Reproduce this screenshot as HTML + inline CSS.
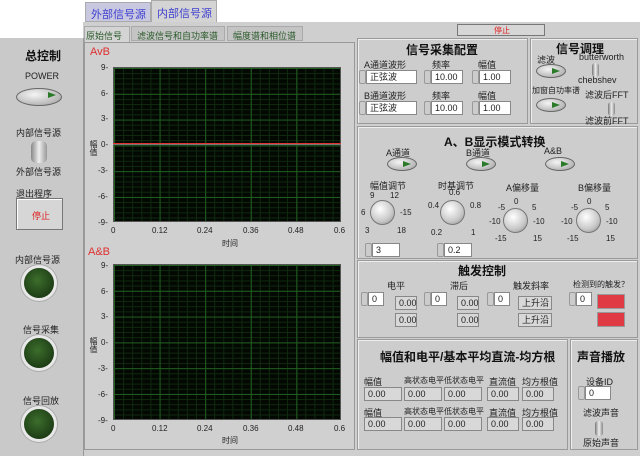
<!DOCTYPE html>
<html><head><meta charset="utf-8"><style>
*{margin:0;padding:0;box-sizing:border-box}
body{width:640px;height:456px;background:#fff;position:relative;overflow:hidden;font-family:"Liberation Sans","Noto Sans CJK SC",sans-serif;font-size:9px;color:#222}
.a{position:absolute}
.box{position:absolute;background:#cdcdcd;border:1px solid #9a9a9a;box-shadow:inset 1px 1px 0 #eee}
.t{position:absolute;white-space:nowrap}
.h{font-weight:bold;font-size:12px;color:#111}
.plot{position:absolute;background:#030803;
background-image:linear-gradient(#1f5e1f 1px,transparent 1px),linear-gradient(90deg,#1f5e1f 1px,transparent 1px),linear-gradient(#0f2a0f 1px,transparent 1px),linear-gradient(90deg,#0f2a0f 1px,transparent 1px);
background-size:45.6px 25.8px,45.6px 25.8px,9.12px 5.16px,9.12px 5.16px;border:1px solid #555}
.btn{position:absolute;width:34px;height:14px;border-radius:50%;background:radial-gradient(ellipse at 40% 35%,#f4f4f4,#b8b8b8 70%,#888);border:1px solid #666}
.btn:after{content:"";position:absolute;right:5px;top:3px;border-left:8px solid #2a7a2a;border-top:3px solid transparent;border-bottom:3px solid transparent;width:0;height:0}
.in{position:absolute;height:14px;background:#fff;border:1px solid #888;font-size:9px;padding-left:3px;line-height:12px}
.ro{background:#d8d8d8}
.sp{position:absolute;width:7px;height:14px;background:#ccc;border:1px solid #999;border-radius:2px}
.led{position:absolute;width:30px;height:30px;border-radius:50%;background:radial-gradient(circle at 45% 40%,#3c6e2c,#1e3e16 70%);box-shadow:0 0 0 3px #e8e8e8,0 0 0 4px #aaa}
.knob{position:absolute;width:25px;height:25px;border-radius:50%;background:radial-gradient(circle at 40% 35%,#fff,#c8c8c8 60%,#888);border:1px solid #777}
.sc{position:absolute;font-size:8px}
</style></head><body>
<div class="a" style="left:85px;top:2px;width:66px;height:20px;background:#c8c8e0;border:1px solid #aaa"></div>
<div class="t" style="left:91px;top:6px;color:#4040d0;font-size:11px">外部信号源</div>
<div class="a" style="left:151px;top:0;width:66px;height:24px;background:#d4d4d4;border:1px solid #aaa"></div>
<div class="t" style="left:157px;top:5px;color:#4040d0;font-size:11px">内部信号源</div>
<div class="a" style="left:83px;top:22px;width:557px;height:434px;background:#cfcfcf"></div>
<div class="a" style="left:0;top:38px;width:84px;height:418px;background:#c9c9c9;border-right:1px solid #999"></div>
<div class="t h" style="left:25px;top:47px">总控制</div>
<div class="t" style="left:25px;top:71px">POWER</div>
<div class="btn" style="left:16px;top:88px;width:46px;height:18px"></div>
<div class="t" style="left:16px;top:126px">内部信号源</div>
<div class="a" style="left:31px;top:141px;width:16px;height:22px;border-radius:5px;background:linear-gradient(90deg,#888,#eee,#999)"></div>
<div class="t" style="left:16px;top:165px">外部信号源</div>
<div class="t" style="left:16px;top:187px">退出程序</div>
<div class="a" style="left:16px;top:198px;width:47px;height:32px;background:#d6d6d6;border:1px solid #777;box-shadow:inset 1px 1px 0 #fff"></div>
<div class="t" style="left:32px;top:209px;color:#e02020">停止</div>
<div class="t" style="left:15px;top:253px">内部信号源</div>
<div class="led" style="left:24px;top:268px"></div>
<div class="t" style="left:23px;top:323px">信号采集</div>
<div class="led" style="left:24px;top:338px"></div>
<div class="t" style="left:23px;top:394px">信号回放</div>
<div class="led" style="left:24px;top:409px"></div>
<div class="a" style="left:84px;top:26px;width:46px;height:18px;background:#d4d4d4;border:1px solid #aaa;border-bottom:none"></div>
<div class="t" style="left:86px;top:29px;color:#2a5a2a">原始信号</div>
<div class="a" style="left:131px;top:26px;width:94px;height:15px;background:#c4c4c4;border:1px solid #aaa"></div>
<div class="t" style="left:137px;top:29px;color:#2a5a2a">滤波信号和自功率谱</div>
<div class="a" style="left:227px;top:26px;width:76px;height:15px;background:#c4c4c4;border:1px solid #aaa"></div>
<div class="t" style="left:233px;top:29px;color:#2a5a2a">幅度谱和相位谱</div>
<div class="a" style="left:84px;top:42px;width:271px;height:408px;background:#d0d0d0;border:1px solid #999"></div>
<div class="t" style="left:90px;top:46px;color:#e03030;font-size:11px">AvB</div>
<div class="plot" style="left:113px;top:67px;width:228px;height:155px"></div>
<div class="a" style="left:113px;top:143px;width:228px;height:1px;background:#e03030"></div>
<div class="a" style="left:113px;top:144px;width:228px;height:1px;background:#777"></div>
<div class="t" style="left:88px;top:140px;font-size:8px;writing-mode:vertical-rl">幅值</div>
<div class="sc" style="left:101px;top:63px">9-</div><div class="sc" style="left:101px;top:89px">6-</div><div class="sc" style="left:101px;top:114px">3-</div><div class="sc" style="left:101px;top:140px">0-</div><div class="sc" style="left:98px;top:166px">-3-</div><div class="sc" style="left:98px;top:192px">-6-</div><div class="sc" style="left:98px;top:218px">-9-</div>
<div class="sc" style="left:111px;top:226px">0</div><div class="sc" style="left:152px;top:226px">0.12</div><div class="sc" style="left:197px;top:226px">0.24</div><div class="sc" style="left:243px;top:226px">0.36</div><div class="sc" style="left:288px;top:226px">0.48</div><div class="sc" style="left:334px;top:226px">0.6</div>
<div class="t" style="left:222px;top:238px;font-size:8px">时间</div>
<div class="t" style="left:88px;top:246px;color:#e03030;font-size:11px">A&amp;B</div>
<div class="plot" style="left:113px;top:264px;width:228px;height:156px"></div>
<div class="t" style="left:88px;top:337px;font-size:8px;writing-mode:vertical-rl">幅值</div>
<div class="sc" style="left:101px;top:261px">9-</div><div class="sc" style="left:101px;top:287px">6-</div><div class="sc" style="left:101px;top:312px">3-</div><div class="sc" style="left:101px;top:338px">0-</div><div class="sc" style="left:98px;top:364px">-3-</div><div class="sc" style="left:98px;top:390px">-6-</div><div class="sc" style="left:98px;top:416px">-9-</div>
<div class="sc" style="left:111px;top:424px">0</div><div class="sc" style="left:152px;top:424px">0.12</div><div class="sc" style="left:197px;top:424px">0.24</div><div class="sc" style="left:243px;top:424px">0.36</div><div class="sc" style="left:288px;top:424px">0.48</div><div class="sc" style="left:334px;top:424px">0.6</div>
<div class="t" style="left:222px;top:435px;font-size:8px">时间</div>
<div class="a" style="left:457px;top:24px;width:88px;height:12px;background:#d6d6d6;border:1px solid #777"></div>
<div class="t" style="left:494px;top:25px;color:#e02020;font-size:8px">停止</div>
<div class="box" style="left:357px;top:38px;width:171px;height:86px"></div>
<div class="t h" style="left:406px;top:41px">信号采集配置</div>
<div class="t" style="left:364px;top:58px">A通道波形</div><div class="t" style="left:432px;top:58px">频率</div><div class="t" style="left:478px;top:58px">幅值</div>
<div class="sp" style="left:359px;top:70px"></div><div class="in" style="left:366px;top:70px;width:51px">正弦波</div>
<div class="sp" style="left:424px;top:70px"></div><div class="in" style="left:431px;top:70px;width:32px">10.00</div>
<div class="sp" style="left:472px;top:70px"></div><div class="in" style="left:479px;top:70px;width:32px">1.00</div>
<div class="t" style="left:364px;top:89px">B通道波形</div><div class="t" style="left:432px;top:89px">频率</div><div class="t" style="left:478px;top:89px">幅值</div>
<div class="sp" style="left:359px;top:101px"></div><div class="in" style="left:366px;top:101px;width:51px">正弦波</div>
<div class="sp" style="left:424px;top:101px"></div><div class="in" style="left:431px;top:101px;width:32px">10.00</div>
<div class="sp" style="left:472px;top:101px"></div><div class="in" style="left:479px;top:101px;width:32px">1.00</div>
<div class="box" style="left:530px;top:38px;width:108px;height:86px"></div>
<div class="t h" style="left:556px;top:40px">信号调理</div>
<div class="t" style="left:537px;top:53px">滤波</div>
<div class="t" style="left:579px;top:52px">butterworth</div>
<div class="btn" style="left:536px;top:64px;width:30px"></div>
<div class="a" style="left:592px;top:63px;width:7px;height:14px;background:linear-gradient(90deg,#777,#eee,#888);border-radius:3px"></div>
<div class="t" style="left:578px;top:75px">chebshev</div>
<div class="t" style="left:532px;top:85px;font-size:8px">加窗自功率谱</div>
<div class="t" style="left:585px;top:88px">滤波后FFT</div>
<div class="btn" style="left:536px;top:98px;width:30px"></div>
<div class="a" style="left:608px;top:102px;width:7px;height:14px;background:linear-gradient(90deg,#777,#eee,#888);border-radius:3px"></div>
<div class="t" style="left:585px;top:114px">滤波前FFT</div>
<div class="box" style="left:357px;top:126px;width:281px;height:133px"></div>
<div class="t h" style="left:444px;top:133px">A、B显示模式转换</div>
<div class="t" style="left:386px;top:146px">A通道</div><div class="t" style="left:466px;top:146px">B通道</div><div class="t" style="left:544px;top:146px">A&amp;B</div>
<div class="btn" style="left:387px;top:157px;width:30px"></div>
<div class="btn" style="left:466px;top:157px;width:30px"></div>
<div class="btn" style="left:545px;top:157px;width:30px"></div>
<div class="t" style="left:370px;top:179px">幅值调节</div><div class="t" style="left:438px;top:179px">时基调节</div><div class="t" style="left:506px;top:181px">A偏移量</div><div class="t" style="left:578px;top:181px">B偏移量</div>
<div class="knob" style="left:370px;top:200px"></div><div class="knob" style="left:440px;top:200px"></div><div class="knob" style="left:503px;top:208px"></div><div class="knob" style="left:576px;top:208px"></div>
<div class="sc" style="left:370px;top:191px">9</div><div class="sc" style="left:390px;top:191px">12</div><div class="sc" style="left:361px;top:208px">6</div><div class="sc" style="left:400px;top:208px">-15</div><div class="sc" style="left:365px;top:226px">3</div><div class="sc" style="left:397px;top:226px">18</div>
<div class="sc" style="left:449px;top:188px">0.6</div><div class="sc" style="left:428px;top:201px">0.4</div><div class="sc" style="left:470px;top:201px">0.8</div><div class="sc" style="left:431px;top:228px">0.2</div><div class="sc" style="left:471px;top:228px">1</div>
<div class="sc" style="left:514px;top:197px">0</div><div class="sc" style="left:498px;top:203px">-5</div><div class="sc" style="left:532px;top:203px">5</div><div class="sc" style="left:489px;top:217px">-10</div><div class="sc" style="left:533px;top:217px">-10</div><div class="sc" style="left:495px;top:234px">-15</div><div class="sc" style="left:533px;top:234px">15</div>
<div class="sc" style="left:587px;top:197px">0</div><div class="sc" style="left:571px;top:203px">-5</div><div class="sc" style="left:605px;top:203px">5</div><div class="sc" style="left:561px;top:217px">-10</div><div class="sc" style="left:606px;top:217px">-10</div><div class="sc" style="left:567px;top:234px">-15</div><div class="sc" style="left:606px;top:234px">15</div>
<div class="sp" style="left:365px;top:243px"></div><div class="in" style="left:372px;top:243px;width:28px">3</div>
<div class="sp" style="left:437px;top:243px"></div><div class="in" style="left:444px;top:243px;width:28px">0.2</div>
<div class="box" style="left:357px;top:260px;width:281px;height:78px"></div>
<div class="t h" style="left:458px;top:262px">触发控制</div>
<div class="t" style="left:387px;top:279px">电平</div><div class="t" style="left:450px;top:279px">滞后</div><div class="t" style="left:513px;top:279px">触发斜率</div><div class="t" style="left:573px;top:279px;font-size:8px">检测到的触发？</div>
<div class="sp" style="left:361px;top:292px"></div><div class="in" style="left:368px;top:292px;width:16px">0</div>
<div class="in ro" style="left:395px;top:296px;width:22px">0.00</div><div class="in ro" style="left:395px;top:313px;width:22px">0.00</div>
<div class="sp" style="left:424px;top:292px"></div><div class="in" style="left:431px;top:292px;width:16px">0</div>
<div class="in ro" style="left:457px;top:296px;width:22px">0.00</div><div class="in ro" style="left:457px;top:313px;width:22px">0.00</div>
<div class="sp" style="left:487px;top:292px"></div><div class="in" style="left:494px;top:292px;width:16px">0</div>
<div class="in ro" style="left:518px;top:296px;width:34px">上升沿</div><div class="in ro" style="left:518px;top:313px;width:34px">上升沿</div>
<div class="sp" style="left:569px;top:292px"></div><div class="in" style="left:576px;top:292px;width:16px">0</div>
<div class="a" style="left:597px;top:294px;width:28px;height:15px;background:#e03a44;border:1px solid #999"></div>
<div class="a" style="left:597px;top:312px;width:28px;height:15px;background:#e03a44;border:1px solid #999"></div>
<div class="box" style="left:357px;top:339px;width:211px;height:111px"></div>
<div class="t h" style="left:380px;top:348px">幅值和电平/基本平均直流-均方根</div>
<div class="t" style="left:364px;top:375px">幅值</div><div class="t" style="left:404px;top:375px;font-size:8px">高状态电平低状态电平</div><div class="t" style="left:489px;top:375px">直流值</div><div class="t" style="left:522px;top:375px">均方根值</div>
<div class="in ro" style="left:364px;top:387px;width:38px">0.00</div><div class="in ro" style="left:404px;top:387px;width:38px">0.00</div><div class="in ro" style="left:444px;top:387px;width:38px">0.00</div><div class="in ro" style="left:487px;top:387px;width:32px">0.00</div><div class="in ro" style="left:522px;top:387px;width:32px">0.00</div>
<div class="t" style="left:364px;top:406px">幅值</div><div class="t" style="left:404px;top:406px;font-size:8px">高状态电平低状态电平</div><div class="t" style="left:489px;top:406px">直流值</div><div class="t" style="left:522px;top:406px">均方根值</div>
<div class="in ro" style="left:364px;top:417px;width:38px">0.00</div><div class="in ro" style="left:404px;top:417px;width:38px">0.00</div><div class="in ro" style="left:444px;top:417px;width:38px">0.00</div><div class="in ro" style="left:487px;top:417px;width:32px">0.00</div><div class="in ro" style="left:522px;top:417px;width:32px">0.00</div>
<div class="box" style="left:570px;top:339px;width:68px;height:111px"></div>
<div class="t h" style="left:577px;top:348px">声音播放</div>
<div class="t" style="left:586px;top:375px">设备ID</div>
<div class="sp" style="left:578px;top:386px"></div><div class="in" style="left:585px;top:386px;width:26px">0</div>
<div class="t" style="left:583px;top:406px">滤波声音</div>
<div class="a" style="left:595px;top:421px;width:8px;height:15px;background:linear-gradient(90deg,#777,#eee,#888);border-radius:3px"></div>
<div class="t" style="left:583px;top:436px">原始声音</div>
</body></html>
